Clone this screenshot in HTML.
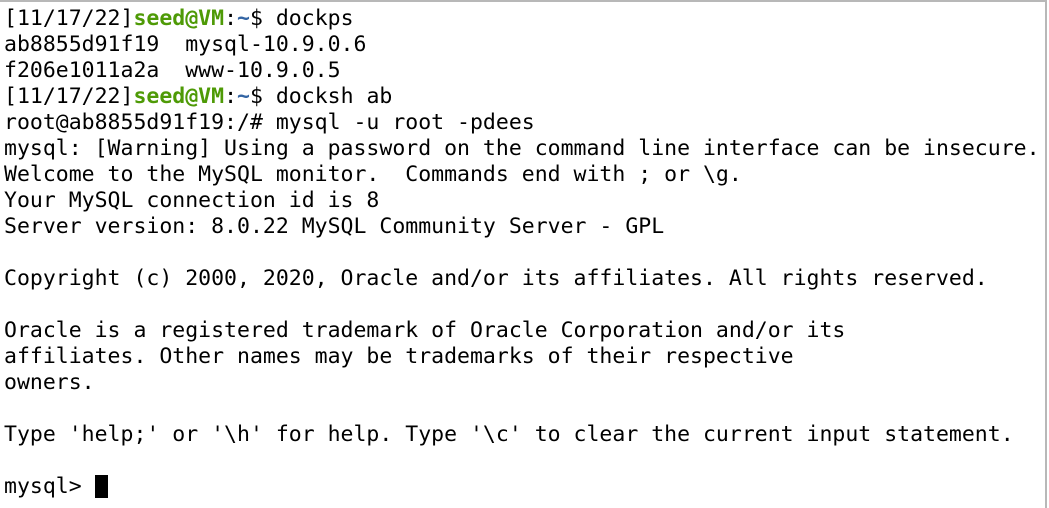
<!DOCTYPE html><html><head><style>
html,body{margin:0;padding:0;background:#fff;}
body{width:1049px;height:506px;overflow:hidden;position:relative;}
.frame{position:absolute;left:0;top:0;width:1045px;height:506px;border-top:2px solid #b8b8b8;border-right:2px solid #b8b8b8;}
pre{position:absolute;left:4px;top:6px;margin:0;font-family:"DejaVu Sans Mono","Liberation Mono",monospace;font-size:21.5px;line-height:26px;color:#000;}
.g{color:#4e9a06;font-weight:bold}.b{color:#3465a4;font-weight:bold}
.cur{display:inline-block;width:13px;height:23px;background:#000;vertical-align:-5px;}
</style></head><body><div class="frame"></div><pre>[11/17/22]<span class="g">seed@VM</span>:<span class="b">~</span>$ dockps
ab8855d91f19  mysql-10.9.0.6
f206e1011a2a  www-10.9.0.5
[11/17/22]<span class="g">seed@VM</span>:<span class="b">~</span>$ docksh ab
root@ab8855d91f19:/# mysql -u root -pdees
mysql: [Warning] Using a password on the command line interface can be insecure.
Welcome to the MySQL monitor.  Commands end with ; or \g.
Your MySQL connection id is 8
Server version: 8.0.22 MySQL Community Server - GPL

Copyright (c) 2000, 2020, Oracle and/or its affiliates. All rights reserved.

Oracle is a registered trademark of Oracle Corporation and/or its
affiliates. Other names may be trademarks of their respective
owners.

Type 'help;' or '\h' for help. Type '\c' to clear the current input statement.

mysql&gt; <span class="cur"></span></pre></body></html>
